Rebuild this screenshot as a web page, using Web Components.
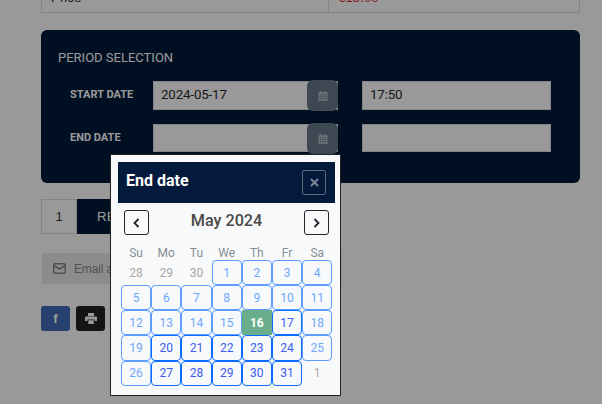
<!DOCTYPE html>
<html>
<head>
<meta charset="utf-8">
<style>
html, body { margin: 0; height: 100%; }
body { width: 602px; height: 404px; overflow: hidden; background: #fff; font-family: Roboto, "Liberation Sans", sans-serif; position: relative; }
</style>
</head>
<body>
<product-page></product-page>
<page-overlay></page-overlay>
<date-dialog title-text="End date" month="May 2024"></date-dialog>

<script>
const ARIAL = `"Liberation Sans", sans-serif`;
const CAL_ICON = `<svg width="10" height="10" viewBox="0 0 10 11"><path fill="currentColor" d="M2 0h1v1.500h4V0h1v1.500h1.500a.5.500 0 0 1 .5.500v8.500a.5.500 0 0 1-.5.500H.5a.5.500 0 0 1-.5-.5V2a.5.500 0 0 1 .5-.5H2z"/><path stroke="#67788a" stroke-width=".6" fill="none" d="M0 3.800h10M0 6h10M0 8.200h10M2.500 3.800V11M5 3.800V11M7.500 3.800V11"/></svg>`;

class ProductPage extends HTMLElement {
    constructor() {
        super();
        this.attachShadow({ mode: "open" });
        this.shadowRoot.innerHTML = `
<style>
:host { display: block; width: 602px; height: 404px; overflow: hidden; color: #333; }
.wrap { padding: 0 22px 0 41px; margin-top: -17px; display: flex; flex-direction: column; }
.price-row { display: grid; grid-template-columns: 286px 253px; height: 30px; border: 1px solid #ddd; border-top: 0; box-sizing: border-box; font: 13.330px/30px ${ARIAL}; }
.price-row span { padding-left: 9px; }
.price-row span + span { border-left: 1px solid #ddd; color: #dc3545; }
.period { margin-top: 17px; height: 153px; background: #02193a; border-radius: 6px; box-sizing: border-box; padding: 20px 29px 0 17px; color: #fff; }
h2 { margin: 0; font-size: 13px; font-weight: 400; line-height: 16px; height: 16px; }
.fields { margin: 15px 0 0 12px; display: grid; grid-template-columns: 83px 185px 24px 189px; grid-template-rows: 29px 28px; row-gap: 14px; }
label { font-size: 11px; font-weight: 700; line-height: 28px; }
.input { box-sizing: border-box; background: #fff; border: 1px solid #ddd; font-size: 13.330px; letter-spacing: -.15px; line-height: 26px; padding-left: 7px; color: #2a2a2a; }
.cal { width: 31px; height: 31px; margin: -1px 0 0 -31px; background: #67788a; color: #b7c8d0; border-radius: 6px; display: flex; align-items: center; justify-content: center; position: relative; }
.cal svg { margin-top: 1px; }
.qty-row { margin-top: 16px; display: flex; height: 35px; font-family: ${ARIAL}; }
.qty { width: 36px; box-sizing: border-box; border: 1px solid #ddd; text-align: center; line-height: 33px; font-size: 13px; }
.reserve { width: 200px; background: #02193a; color: #fff; font-size: 13.330px; line-height: 35px; padding-left: 20px; box-sizing: border-box; }
.email { margin: 19px 0 0 1px; width: 300px; height: 31px; background: #eaeaea; display: flex; align-items: center; gap: 8px; padding-left: 11px; box-sizing: border-box; font: 12px ${ARIAL}; letter-spacing: -.15px; color: #888; }
.social { margin-top: 22px; display: flex; gap: 6px; }
.social div { width: 29px; height: 25px; border-radius: 3px; display: flex; align-items: center; justify-content: center; color: #fff; }
.fb { background: #416bb9; font: 700 13px ${ARIAL}; }
.pr { background: #222; }
</style>
<div class="wrap">
  <div class="price-row"><span>Price</span><span>€15.00</span></div>
  <section class="period">
    <h2>PERIOD SELECTION</h2>
    <div class="fields">
      <label>START DATE</label><div class="input">2024-05-17</div><div class="cal">${CAL_ICON}</div><div class="input">17:50</div>
      <label>END DATE</label><div class="input"></div><div class="cal">${CAL_ICON}</div><div class="input"></div>
    </div>
  </section>
  <div class="qty-row"><div class="qty">1</div><div class="reserve">RESERVE</div></div>
  <div class="email"><svg width="13" height="11" viewBox="0 0 13 11"><rect x=".75" y=".75" width="11.500" height="9.500" rx="1.200" fill="none" stroke="#888" stroke-width="1.500"/><path fill="none" stroke="#888" stroke-width="1.500" d="M1 2.500l5.500 3.500 5.500-3.500"/></svg>Email a</div>
  <div class="social">
    <div class="fb">f</div>
    <div class="pr"><svg width="12" height="11" viewBox="0 0 12 11"><path fill="currentColor" d="M3 0h6v3H3zM1 3.500h10a1 1 0 0 1 1 1V8H9.500V6.500h-7V8H0V4.500a1 1 0 0 1 1-1zM3.300 7.300h5.400V11H3.300z"/></svg></div>
  </div>
</div>`;
    }
}

class PageOverlay extends HTMLElement {
    constructor() {
        super();
        this.attachShadow({ mode: "open" });
        this.shadowRoot.innerHTML = `
<style>
:host { display: block; position: absolute; inset: 0; background: rgba(0,0,0,.4); }
</style>`;
    }
}

class DayCell extends HTMLElement {
    constructor() {
        super();
        this.attachShadow({ mode: "open" });
        this.shadowRoot.innerHTML = `
<style>
:host { display: flex; align-items: center; justify-content: center; box-sizing: border-box; font-size: 12px; border: 1px solid transparent; border-radius: 4px; color: #a8a8a8; }
:host([kind="free"]) { border-color: #5c9dff; color: #6ea8fe; }
:host([kind="active"]) { border-color: #0a6cff; color: #3a5cf0; }
:host([kind="today"]) { background: #6aae8e; color: #fff; font-weight: 700; border-color: #6aae8e; border-radius: 0; }
</style>
<slot></slot>`;
    }
}

class DateDialog extends HTMLElement {
    constructor() {
        super();
        this.attachShadow({ mode: "open" });
    }

    connectedCallback() {
        this.shadowRoot.innerHTML = `
<style>
:host { display: block; position: absolute; left: 110px; top: 154px; width: 231px; height: 242px; box-sizing: border-box; background: #f8f9fa; border: 1px solid #222; padding: 7px 5px 0 7px; }
header { height: 41px; background: #031a3d; display: flex; align-items: center; justify-content: space-between; padding: 0 8px; color: #fff; }
header b { font-size: 16px; font-weight: 700; margin-top: -4px; }
.close { width: 24px; height: 25px; box-sizing: border-box; border: 1px solid #5c6a7a; border-radius: 2px; color: #7f8a98; display: flex; align-items: center; justify-content: center; margin-right: 1px; }
.nav { display: flex; align-items: center; justify-content: space-between; margin: 7px 6px 0 6px; height: 25px; }
.nav-btn { width: 25px; height: 25px; box-sizing: border-box; border: 1px solid #212529; border-radius: 3px; display: flex; align-items: center; justify-content: center; }
.month { font-size: 16.200px; font-weight: 500; color: #4a4a4a; margin-bottom: 4px; }
.heads, .days { display: grid; grid-template-columns: repeat(7, 30.200px); margin-left: 3px; }
.heads { margin-top: 12px; height: 13px; font-size: 12px; color: #868e96; text-align: center; line-height: 13px; }
.days { grid-auto-rows: 25.150px; }
</style>
<header><b>${this.getAttribute("title-text")}</b><div class="close"><svg width="9" height="9" viewBox="0 0 9 9"><path stroke="currentColor" stroke-width="1.800" d="M1 1l7 7M8 1L1 8"/></svg></div></header>
<div class="nav">
  <div class="nav-btn"><svg width="7" height="10" viewBox="0 0 7 10"><path fill="none" stroke="#212529" stroke-width="1.800" d="M5.500 1L1.500 5l4 4"/></svg></div>
  <span class="month">${this.getAttribute("month")}</span>
  <div class="nav-btn"><svg width="7" height="10" viewBox="0 0 7 10"><path fill="none" stroke="#212529" stroke-width="1.800" d="M1.500 1l4 4-4 4"/></svg></div>
</div>
<div class="heads"><span>Su</span><span>Mo</span><span>Tu</span><span>We</span><span>Th</span><span>Fr</span><span>Sa</span></div>
<div class="days">${this.renderDays()}</div>`;
    }

    renderDays() {
        const cells = [[28, "off"], [29, "off"], [30, "off"]];
        for (let d = 1; d <= 31; d++) {
            let kind = "free";
            if (d === 16) kind = "today";
            else if (d >= 17 && ![18, 19, 25, 26].includes(d)) kind = "active";
            cells.push([d, kind]);
        }
        cells.push([1, "off"]);
        return cells.map(([d, kind]) => `<day-cell kind="${kind}">${d}</day-cell>`).join("");
    }
}

customElements.define("product-page", ProductPage);
customElements.define("page-overlay", PageOverlay);
customElements.define("day-cell", DayCell);
customElements.define("date-dialog", DateDialog);
</script>
</body>
</html>
